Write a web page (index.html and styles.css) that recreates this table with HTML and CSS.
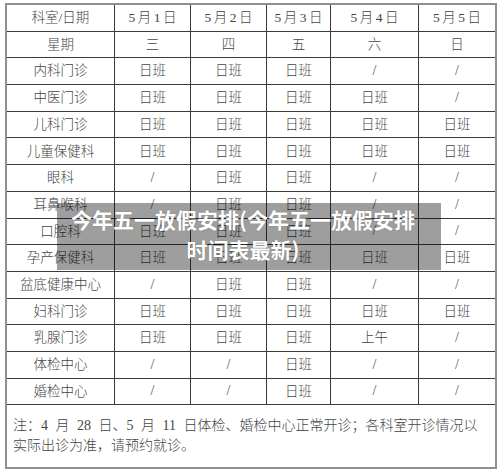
FILE: index.html
```html
<!DOCTYPE html>
<html lang="zh-CN">
<head>
<meta charset="utf-8">
<title>今年五一放假安排</title>
<link rel="stylesheet" href="styles.css">
</head>
<body>
<div class="page">
  <div class="sheet">
    <div class="cell">科室/日期</div>
    <div class="cell date">5月1日</div>
    <div class="cell date">5月2日</div>
    <div class="cell date">5月3日</div>
    <div class="cell date">5月4日</div>
    <div class="cell date">5月5日</div>

    <div class="cell">星期</div>
    <div class="cell">三</div>
    <div class="cell">四</div>
    <div class="cell">五</div>
    <div class="cell">六</div>
    <div class="cell">日</div>

    <div class="cell">内科门诊</div>
    <div class="cell">日班</div>
    <div class="cell">日班</div>
    <div class="cell">日班</div>
    <div class="cell slash">/</div>
    <div class="cell slash">/</div>

    <div class="cell">中医门诊</div>
    <div class="cell">日班</div>
    <div class="cell">日班</div>
    <div class="cell">日班</div>
    <div class="cell">日班</div>
    <div class="cell slash">/</div>

    <div class="cell">儿科门诊</div>
    <div class="cell">日班</div>
    <div class="cell">日班</div>
    <div class="cell">日班</div>
    <div class="cell">日班</div>
    <div class="cell">日班</div>

    <div class="cell">儿童保健科</div>
    <div class="cell">日班</div>
    <div class="cell">日班</div>
    <div class="cell">日班</div>
    <div class="cell">日班</div>
    <div class="cell">日班</div>

    <div class="cell">眼科</div>
    <div class="cell slash">/</div>
    <div class="cell">日班</div>
    <div class="cell">日班</div>
    <div class="cell slash">/</div>
    <div class="cell slash">/</div>

    <div class="cell">耳鼻喉科</div>
    <div class="cell slash">/</div>
    <div class="cell">日班</div>
    <div class="cell">日班</div>
    <div class="cell slash">/</div>
    <div class="cell slash">/</div>

    <div class="cell">口腔科</div>
    <div class="cell">日班</div>
    <div class="cell">日班</div>
    <div class="cell">日班</div>
    <div class="cell slash">/</div>
    <div class="cell slash">/</div>

    <div class="cell">孕产保健科</div>
    <div class="cell">日班</div>
    <div class="cell">日班</div>
    <div class="cell">日班</div>
    <div class="cell">日班</div>
    <div class="cell">日班</div>

    <div class="cell">盆底健康中心</div>
    <div class="cell slash">/</div>
    <div class="cell">日班</div>
    <div class="cell">日班</div>
    <div class="cell slash">/</div>
    <div class="cell slash">/</div>

    <div class="cell">妇科门诊</div>
    <div class="cell">日班</div>
    <div class="cell">日班</div>
    <div class="cell">日班</div>
    <div class="cell">日班</div>
    <div class="cell">日班</div>

    <div class="cell">乳腺门诊</div>
    <div class="cell">日班</div>
    <div class="cell">日班</div>
    <div class="cell">日班</div>
    <div class="cell">上午</div>
    <div class="cell slash">/</div>

    <div class="cell">体检中心</div>
    <div class="cell slash">/</div>
    <div class="cell slash">/</div>
    <div class="cell">日班</div>
    <div class="cell slash">/</div>
    <div class="cell slash">/</div>

    <div class="cell">婚检中心</div>
    <div class="cell slash">/</div>
    <div class="cell slash">/</div>
    <div class="cell">日班</div>
    <div class="cell slash">/</div>
    <div class="cell slash">/</div>

    <div class="note">注：4 月 28 日、5 月 11 日体检、婚检中心正常开诊；各科室开诊情况以<br>实际出诊为准，请预约就诊。</div>
  </div>

  <div class="banner">今年五一放假安排(今年五一放假安排时间表最新)</div>
</div>
</body>
</html>
```

FILE: styles.css
```css
html, body {
  margin: 0;
  padding: 0;
  background: #ffffff;
}

.page {
  position: relative;
  width: 500px;
  height: 474px;
  padding: 3px 0 0 5px;
  box-sizing: border-box;
  overflow: hidden;
}

.sheet {
  display: grid;
  grid-template-columns: 107px 75px 75px 63px 87px 76px;
  grid-template-rows: repeat(15, 25.7px) 62px;
  gap: 1px;
  width: max-content;
  background: #3a3a3a;
  border: 2px solid #8f8f8f;
  font-family: "Liberation Serif", "Noto Sans CJK SC", serif;
  font-weight: 300;
  color: #444444;
}

.cell {
  background: #ffffff;
  display: flex;
  align-items: center;
  justify-content: center;
  font-size: 13.5px;
  line-height: 1;
  white-space: nowrap;
}

.date {
  letter-spacing: 2.5px;
  padding-left: 2.5px;
}

.slash {
  font-size: 14px;
  color: #555555;
}

.note {
  grid-column: 1 / -1;
  background: #ffffff;
  box-sizing: border-box;
  padding: 11px 0 0 6px;
  font-size: 14px;
  line-height: 20px;
  word-spacing: 4px;
  white-space: nowrap;
}

.banner {
  position: absolute;
  left: 57px;
  top: 203px;
  width: 384px;
  height: 67px;
  box-sizing: border-box;
  padding: 1px 20px 0 8px;
  background: rgba(0, 0, 0, 0.38);
  color: #ffffff;
  font-family: "Noto Sans CJK SC", sans-serif;
  font-weight: 700;
  font-size: 21px;
  line-height: 30px;
  text-align: center;
  text-shadow: 0 0 1px rgba(0, 0, 0, 0.35);
}
```
